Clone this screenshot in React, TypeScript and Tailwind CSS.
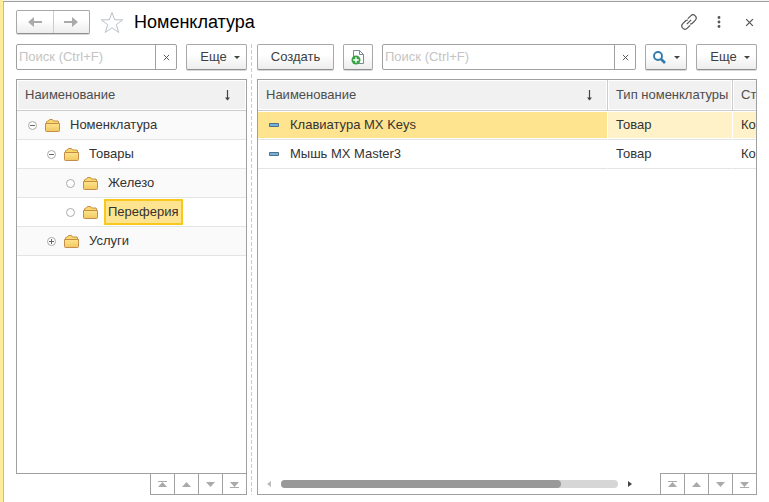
import type { ReactNode } from "react";

const buttonStyle =
  "flex h-[26px] shrink-0 items-center justify-center rounded-xs border border-[#a8a8a8] border-b-[#8f8f8f] bg-linear-to-b from-white from-40% to-[#ededed] text-[#404040] shadow-[0_1px_0_#d8d8d8]";

function Caret() {
  return (
    <svg width="6" height="3" viewBox="0 0 6 3" fill="#444" aria-hidden="true">
      <path d="M0 0h6L3 3z" />
    </svg>
  );
}

function Cross({ size }: { size: number }) {
  return (
    <svg width={size} height={size} viewBox="0 0 8 8" stroke="#555" strokeWidth="1.1" aria-hidden="true">
      <path d="M1 1l6 6M7 1L1 7" />
    </svg>
  );
}

function NavArrow({ back = false }: { back?: boolean }) {
  return (
    <svg width="14" height="10" viewBox="0 0 14 10" fill="#aaa" aria-hidden="true">
      <path d={back ? "M0 5L6 0V4H14V6H6V10z" : "M14 5L8 0V4H0V6H8V10z"} />
    </svg>
  );
}

function SortArrow() {
  return (
    <svg width="7" height="11" viewBox="0 0 7 11" fill="none" stroke="#444" aria-hidden="true">
      <path d="M3.5 0v10" strokeWidth="1.2" />
      <path d="M1 7.5h5L3.5 10.5z" fill="#444" stroke="none" />
    </svg>
  );
}

function Folder() {
  return (
    <svg width="16" height="13" viewBox="0 0 16 13" className="shrink-0" aria-hidden="true">
      <defs>
        <linearGradient id="folder" x1="0" y1="0" x2="0" y2="1">
          <stop offset="0" stopColor="#ffe48c" />
          <stop offset="1" stopColor="#f0c860" />
        </linearGradient>
      </defs>
      <path d="M1.500 5V3l1-1h1l1-1.500h3L8.500 2h4.500l.5 1V5" fill="#fbd968" stroke="#c58d4a" />
      <path d="M.5 4.500h14v7q0 1-1 1h-12q-1 0-1-1z" fill="url(#folder)" stroke="#c58d4a" />
    </svg>
  );
}

function Marker({ kind }: { kind: "minus" | "plus" | "leaf" }) {
  return (
    <svg width="9" height="9" viewBox="0 0 9 9" fill="none" className="shrink-0" aria-hidden="true">
      <circle cx="4.5" cy="4.5" r="4" fill="#fff" stroke="#aaa" />
      {kind !== "leaf" && <path d="M2 4.5h5" stroke="#666" />}
      {kind === "plus" && <path d="M4.5 2v5" stroke="#666" />}
    </svg>
  );
}

function SearchBox({ label }: { label: string }) {
  return (
    <div className="flex h-[26px] min-w-0 flex-1 rounded-xs border border-[#a0a0a0] bg-white">
      <input
        type="text"
        aria-label={label}
        placeholder="Поиск (Ctrl+F)"
        className="min-w-0 flex-1 px-0.5 text-[#333] outline-none placeholder:text-[#c4c4c4]"
      />
      <button aria-label="Очистить" className="flex w-[21px] items-center justify-center border-l border-[#a0a0a0]">
        <Cross size={7} />
      </button>
    </div>
  );
}

function MoreButton() {
  return (
    <button className={`${buttonStyle} w-[61px] gap-[7px] pl-[7px]`}>
      Еще
      <Caret />
    </button>
  );
}

const pagerIcons: { label: string; shape: ReactNode }[] = [
  { label: "В начало", shape: <path d="M0 0h9v1H0zM4.5 1L9 6H0z" /> },
  { label: "Вверх", shape: <path d="M4.5 1L9 6H0z" /> },
  { label: "Вниз", shape: <path d="M0 1h9L4.5 6z" /> },
  { label: "В конец", shape: <path d="M0 1h9L4.5 6zM0 6h9v1H0z" /> },
];

function Pager() {
  return (
    <div className="flex h-[21px] border-t border-[#a0a0a0]">
      {pagerIcons.map(({ label, shape }) => (
        <button key={label} aria-label={label} className="flex w-6 items-center justify-center border-l border-[#a0a0a0]">
          <svg width="9" height="7" viewBox="0 0 9 7" fill="#aaa" aria-hidden="true">
            {shape}
          </svg>
        </button>
      ))}
    </div>
  );
}

type Node = { name: string; indent: string; kind: "minus" | "plus" | "leaf"; level: number; selected?: boolean };

const nodes: Node[] = [
  { name: "Номенклатура", indent: "pl-[11px]", kind: "minus", level: 1 },
  { name: "Товары", indent: "pl-[30px]", kind: "minus", level: 2 },
  { name: "Железо", indent: "pl-[49px]", kind: "leaf", level: 3 },
  { name: "Переферия", indent: "pl-[49px]", kind: "leaf", level: 3, selected: true },
  { name: "Услуги", indent: "pl-[30px]", kind: "plus", level: 2 },
];

function GroupsPane() {
  return (
    <section className="flex w-[231px] shrink-0 flex-col">
      <div className="flex h-[26px] items-center gap-[9px]">
        <SearchBox label="Поиск по группам" />
        <MoreButton />
      </div>
      <div className="mt-[9px] flex min-h-0 flex-1 flex-col border border-[#a0a0a0]">
        <div className="flex h-[31px] shrink-0 items-center justify-between border-b border-[#ccc] bg-[#f1f1f1] pr-[15px] pl-2 text-[#4d4d4d] ring-1 ring-white ring-inset">
          Наименование
          <SortArrow />
        </div>
        <ul role="tree" aria-label="Группы">
          {nodes.map((node) => (
            <li
              key={node.name}
              role="treeitem"
              aria-level={node.level}
              aria-selected={!!node.selected}
              className={`flex h-[29px] items-center border-b border-[#e4e4e4] odd:bg-[#fafafa] ${node.indent}`}
            >
              <Marker kind={node.kind} />
              <span className="w-2" />
              <Folder />
              <span
                className={`ml-[5px] border-2 px-0.5 leading-[22px] ${
                  node.selected ? "border-[#f9c81f] bg-[#ffe48f]" : "border-transparent"
                }`}
              >
                {node.name}
              </span>
            </li>
          ))}
        </ul>
      </div>
      <div className="flex justify-end">
        <div className="-mt-px border-r border-b border-[#a0a0a0]">
          <Pager />
        </div>
      </div>
    </section>
  );
}

const items = [
  { name: "Клавиатура MX Keys", type: "Товар", status: "Ко", selected: true },
  { name: "Мышь MX Master3", type: "Товар", status: "Ко", selected: false },
];

function ItemsTable() {
  return (
    <table className="w-[calc(100%+103px)] table-fixed border-separate border-spacing-0 text-left whitespace-nowrap">
      <colgroup>
        <col />
        <col className="w-[125px]" />
        <col className="w-[126px]" />
      </colgroup>
      <thead>
        <tr className="h-[31px] bg-[#f1f1f1] text-[#4d4d4d]">
          <th className="border-r border-b border-[#ccc] p-0 pr-3.5 pl-2 font-normal shadow-[inset_0_0_0_1px_white]">
            <span className="flex items-center justify-between">
              Наименование
              <SortArrow />
            </span>
          </th>
          <th className="border-r border-b border-[#ccc] p-0 pl-2 font-normal shadow-[inset_0_0_0_1px_white]">
            Тип номенклатуры
          </th>
          <th className="border-b border-[#ccc] p-0 pl-2 font-normal shadow-[inset_0_0_0_1px_white]">Ста</th>
        </tr>
      </thead>
      <tbody>
        {items.map((item) => (
          <tr key={item.name} className={`h-[29px] ${item.selected ? "bg-[#fff2c8]" : "bg-white"}`}>
            <td
              className={`border-r border-b border-r-white border-b-[#e4e4e4] p-0 pl-[11px] shadow-[inset_0_1px_0_white,inset_0_-1px_0_white] ${
                item.selected ? "bg-[#ffe48f]" : ""
              }`}
            >
              <span className="flex items-center gap-[11px]">
                <svg width="10" height="4" viewBox="0 0 10 4" aria-hidden="true">
                  <path d="M.5.5h9v3h-9z" fill="#73b0dc" stroke="#4f7187" />
                </svg>
                {item.name}
              </span>
            </td>
            <td className="border-r border-b border-r-white border-b-[#e4e4e4] p-0 pl-2 shadow-[inset_0_1px_0_white,inset_0_-1px_0_white]">
              {item.type}
            </td>
            <td className="border-b border-b-[#e4e4e4] p-0 pl-2 shadow-[inset_0_1px_0_white,inset_0_-1px_0_white]">
              {item.status}
            </td>
          </tr>
        ))}
      </tbody>
    </table>
  );
}

function ItemsPane() {
  return (
    <section className="flex min-w-0 flex-1 flex-col">
      <div className="flex h-[26px] items-center gap-[9px]">
        <button className={`${buttonStyle} w-[77px]`}>Создать</button>
        <button aria-label="Создать копированием" className={`${buttonStyle} w-[30px]`}>
          <svg width="14" height="16" viewBox="0 0 14 16" fill="none" aria-hidden="true">
            <path d="M2.5 8V1.5h6l4 4v9H8" fill="#fff" stroke="#7c8797" />
            <path d="M8.5 1.5v4h4" stroke="#7c8797" />
            <circle cx="5" cy="11" r="4.5" fill="#35a344" />
            <path d="M5 8.2v5.6M2.2 11h5.6" stroke="#fff" strokeWidth="1.4" />
          </svg>
        </button>
        <SearchBox label="Поиск по номенклатуре" />
        <button aria-label="Найти" className={`${buttonStyle} w-[42px] gap-2`}>
          <svg width="13" height="13" viewBox="0 0 13 13" fill="none" stroke="#347bad" aria-hidden="true">
            <circle cx="5" cy="5" r="4" strokeWidth="1.9" />
            <path d="M8 8l4 4" strokeWidth="2.6" />
          </svg>
          <Caret />
        </button>
        <MoreButton />
      </div>
      <div className="mt-[9px] flex min-h-0 flex-1 flex-col border border-[#a0a0a0]">
        <div className="min-h-0 flex-1 overflow-hidden">
          <ItemsTable />
        </div>
        <div className="flex items-center">
          <div className="flex flex-1 items-center gap-[10px] pr-7 pl-[9px]">
            <svg width="4" height="6" viewBox="0 0 4 6" fill="#bbb" aria-hidden="true">
              <path d="M4 0v6L0 3z" />
            </svg>
            <div className="h-2 flex-1 rounded-full bg-[#d6d6d6]">
              <div className="h-2 w-[83%] rounded-full bg-[#999]" />
            </div>
            <svg width="4" height="6" viewBox="0 0 4 6" fill="#444" aria-hidden="true">
              <path d="M0 0v6l4-3z" />
            </svg>
          </div>
          <Pager />
        </div>
      </div>
    </section>
  );
}

export default function App() {
  return (
    <main className="flex h-screen flex-col border-l-3 border-[#ffec9b] bg-white font-['Liberation_Sans',Arial,sans-serif] text-[13px] text-[#333]">
      <div className="h-0.5 shrink-0 border-b border-[#a0a0a0] bg-[#f4f4f4]" />
      <div className="flex min-h-0 flex-1 flex-col border-l border-[#cbbf86] pt-2 pr-3 pb-[7px] pl-3">
        <header className="flex h-6 shrink-0 items-center">
          <div className="flex h-6 w-[74px] rounded-xs border border-[#a8a8a8] border-b-[#8f8f8f] bg-linear-to-b from-white from-40% to-[#ededed] shadow-[0_1px_0_#d8d8d8]">
            <button aria-label="Назад" className="flex flex-1 items-center justify-center border-r border-[#ccc]">
              <NavArrow back />
            </button>
            <button aria-label="Вперед" className="flex flex-1 items-center justify-center">
              <NavArrow />
            </button>
          </div>
          <button aria-label="В избранное" className="ml-2.5">
            <svg width="24" height="23" viewBox="0 0 24 23" fill="#fff" stroke="#b9c0c8" aria-hidden="true">
              <path d="M12 1.5l2.7 7.3h8l-6.4 4.9 2.4 7.8-6.7-4.7-6.7 4.7 2.4-7.8L1.300 8.800h8z" />
            </svg>
          </button>
          <h1 className="ml-2.5 flex-1 text-lg text-black">Номенклатура</h1>
          <button aria-label="Ссылка">
            <svg width="16" height="16" viewBox="0 0 16 16" fill="none" stroke="#555" strokeWidth="1.2" aria-hidden="true">
              <path d="M6.800 4.700L9.700 1.800a3 3 0 0 1 4.500 4.500L11.300 9.200a3 3 0 0 1-2.300.8" />
              <path d="M9.200 11.300L6.300 14.200a3 3 0 0 1-4.500-4.500L4.700 6.800a3 3 0 0 1 2.300-.8" />
              <path d="M5.800 10.200l4.400-4.400" />
            </svg>
          </button>
          <button aria-label="Меню" className="ml-5">
            <svg width="4" height="12" viewBox="0 0 4 12" fill="#555" aria-hidden="true">
              <circle cx="2" cy="1.500" r="1.400" />
              <circle cx="2" cy="6" r="1.400" />
              <circle cx="2" cy="10.500" r="1.400" />
            </svg>
          </button>
          <button aria-label="Закрыть" className="mr-[3px] ml-6">
            <Cross size={9} />
          </button>
        </header>
        <div className="mt-2.5 flex min-h-0 flex-1">
          <GroupsPane />
          <div className="mr-[5px] ml-1 w-px shrink-0 bg-[repeating-linear-gradient(to_bottom,#ccc_0_4px,transparent_4px_6px)]" />
          <ItemsPane />
        </div>
      </div>
    </main>
  );
}
